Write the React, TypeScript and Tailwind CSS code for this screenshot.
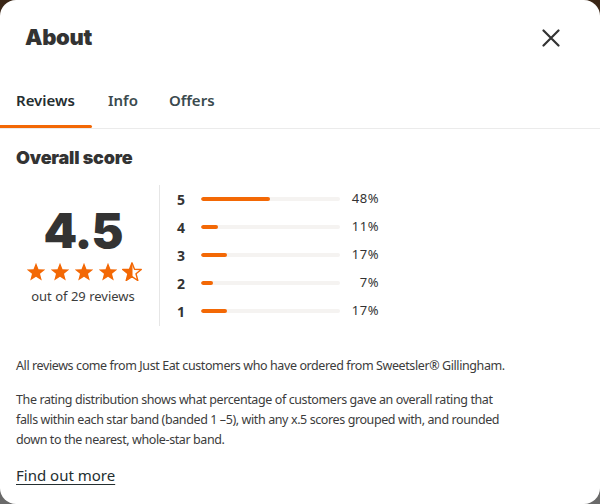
import React from "react";

const rows = [
  { n: 5, p: 48 },
  { n: 4, p: 11 },
  { n: 3, p: 17 },
  { n: 2, p: 7 },
  { n: 1, p: 17 },
];

function Star({ half }: { half?: boolean }) {
  const d =
    "M10 0.8 L12.5 7.2 L19.3 7.5 L14 11.8 L15.8 18.5 L10 14.7 L4.2 18.5 L6 11.8 L0.7 7.5 L7.5 7.2 Z";
  return (
    <svg width="20" height="19" viewBox="0 0 20 19">
      <defs>
        <clipPath id="halfclip">
          <rect x="0" y="0" width="10.5" height="19" />
        </clipPath>
      </defs>
      {half ? (
        <>
          <path d={d} fill="none" stroke="#f36805" strokeWidth="1.4" strokeLinejoin="round" />
          <path d={d} fill="#f36805" clipPath="url(#halfclip)" />
        </>
      ) : (
        <path d={d} fill="#f36805" />
      )}
    </svg>
  );
}

const heavy = { fontFamily: "Inter, Lato, sans-serif" };

export default function App() {
  return (
    <div className="w-[600px] h-[504px] bg-[linear-gradient(180deg,#3a2616_0%,#4a4238_50%,#6a6a6a_100%)]">
      <div
        className="w-[600px] h-[504px] bg-white rounded-[16px] overflow-hidden text-[#242e30]"
        style={{ fontFamily: "'Noto Sans', sans-serif" }}
      >
        <div className="flex items-center justify-between pl-[25px] pr-[40px] h-[73px]">
          <h1 className="text-[22px] font-black text-[#333333] leading-none tracking-[-0.3px]" style={heavy}>
            About
          </h1>
          <svg width="18" height="18" viewBox="0 0 18 18" className="mt-[3px]">
            <path d="M1.5 1.5 L16.5 16.5 M16.5 1.5 L1.5 16.5" stroke="#333" strokeWidth="2.2" strokeLinecap="round" />
          </svg>
        </div>

        <div className="flex border-b border-[#ebebeb] h-[56px] text-[15px] font-semibold">
          <div className="relative w-[92px] flex items-center pl-[16px] text-[#242e30]">
            Reviews
            <div className="absolute left-0 right-0 bottom-0 h-[3px] bg-[#f36805] rounded-r-[2px]" />
          </div>
          <div className="flex items-center pl-[16px] text-[#3a4a4e]">Info</div>
          <div className="flex items-center pl-[31px] text-[#3a4a4e]">Offers</div>
        </div>

        <div className="px-[16px]">
          <h2 className="text-[18px] font-black text-[#333333] mt-[18px] leading-[22px] tracking-[-0.2px]" style={heavy}>
            Overall score
          </h2>

          <div className="flex mt-[16px]">
            <div className="w-[144px] h-[141px] border-r border-[#e6e6e6] flex flex-col items-center pr-[9px]">
              <div className="text-[48px] font-black text-[#333333] leading-none mt-[22px] tracking-[-1px]" style={heavy}>
                4.5
              </div>
              <div className="flex gap-[4px] mt-[7px] ml-[2px]">
                <Star />
                <Star />
                <Star />
                <Star />
                <Star half />
              </div>
              <div className="text-[13px] text-[#3c3c3c] mt-[6px] leading-[18px]">out of 29 reviews</div>
            </div>

            <div className="flex flex-col pl-[17px]">
              {rows.map((r) => (
                <div key={r.n} className="flex items-center h-[28px]">
                  <div className="w-[24px] text-[14px] font-bold text-[#333]">{r.n}</div>
                  <div className="w-[139px] h-[4px] rounded-full bg-[#f5f3f1] overflow-hidden">
                    <div className="h-full bg-[#f36805] rounded-full" style={{ width: `${r.p + 1.5}%` }} />
                  </div>
                  <div className="w-[39px] text-right text-[13px] text-[#333] tracking-[0.5px]">{r.p}%</div>
                </div>
              ))}
            </div>
          </div>

          <div className="w-[490px] text-[12.5px] leading-[20px] text-[#3c3c3c] tracking-[-0.4px]">
            <p className="mt-[30px]">
              All reviews come from Just Eat customers who have ordered from Sweetsler® Gillingham.
            </p>
            <p className="mt-[14px]">
              The rating distribution shows what percentage of customers gave an overall rating that falls within each star
              band (banded 1 –5), with any x.5 scores grouped with, and rounded down to the nearest, whole-star band.
            </p>
          </div>
          <a className="inline-block mt-[14px] text-[15px] leading-[22px] text-[#242e30] underline underline-offset-[3px]">
            Find out more
          </a>
        </div>
      </div>
    </div>
  );
}
